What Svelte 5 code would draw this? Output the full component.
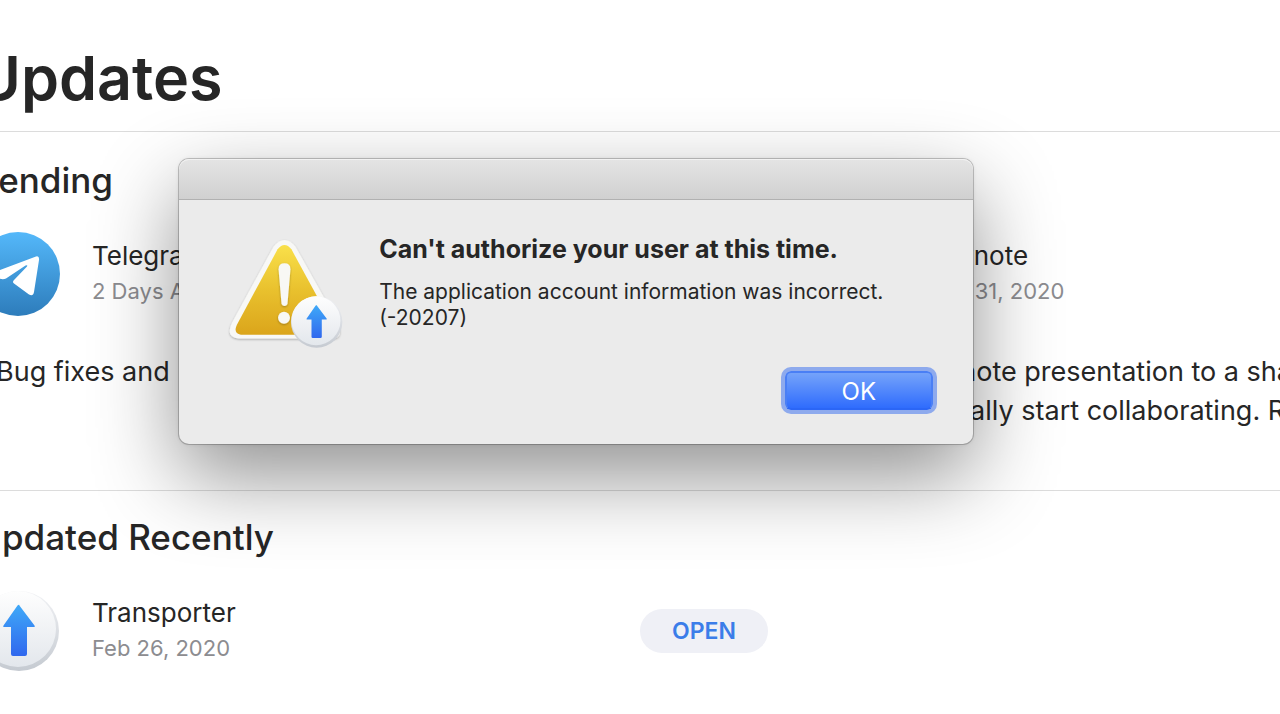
<script lang="ts">
  const pending = [
    { name: 'Telegram', date: '2 Days Ago', icon: 'telegram', notes: ['Bug fixes and'] },
    {
      name: 'Keynote',
      date: 'Mar 31, 2020',
      icon: '',
      notes: ['Move a Keynote presentation to a shared', 'to automatically start collaborating. Requires'],
    },
  ];

  const recent = [{ name: 'Transporter', date: 'Feb 26, 2020' }];
</script>

{#snippet transporter(id: string)}
  <svg class="icon" viewBox="0 0 84 84" aria-hidden="true">
    <defs>
      <linearGradient id="{id}-disc" x1="0" y1="0" x2="0" y2="1">
        <stop offset="0" stop-color="#fefefe" />
        <stop offset="1" stop-color="#e3e7ec" />
      </linearGradient>
      <linearGradient id="{id}-rim" x1="0" y1="0" x2="0" y2="1">
        <stop offset="0" stop-color="#f1f2f5" />
        <stop offset="1" stop-color="#c5cad1" />
      </linearGradient>
      <linearGradient id="{id}-arrow" x1="0" y1="0" x2="0" y2="1">
        <stop offset="0" stop-color="#3fa9f8" />
        <stop offset="1" stop-color="#3068ee" />
      </linearGradient>
    </defs>
    <circle cx="43" cy="42" r="40" fill="url(#{id}-rim)" />
    <circle cx="42" cy="40" r="38" fill="url(#{id}-disc)" />
    <path
      d="M43 16 L58.500 36.500 Q59.500 38 58 38 H51 V65 Q51 67 49 67 H37 Q35 67 35 65 V38 H28 Q26.500 38 27.500 36.500 L41.500 16.500 Q43 15 44 16.500 Z"
      fill="url(#{id}-arrow)"
    />
  </svg>
{/snippet}

<div class="store">
  <main>
    <header>
      <h1>Updates</h1>
    </header>

    <section class="pending">
      <h2>Pending</h2>
      <div class="columns">
        {#each pending as app}
          <article>
            <div class="app">
              {#if app.icon === 'telegram'}
                <svg class="icon" viewBox="0 0 84 84" aria-hidden="true">
                  <defs>
                    <linearGradient id="sky" x1="0" y1="0" x2="0" y2="1">
                      <stop offset="0" stop-color="#54b8fa" />
                      <stop offset="1" stop-color="#2d7cbb" />
                    </linearGradient>
                  </defs>
                  <circle cx="42" cy="42" r="42" fill="url(#sky)" />
                  <path
                    d="M16 41 L60 24.500 Q63.500 23.500 63 28 L58 60 Q57 65 53 62.500 L38 51.500 Q36 50 38 48 L51 34.500 Q52 32.500 49.500 33.500 L30 46.500 Q27 48 23 46.500 L16 44 Q13 42.500 16 41 Z"
                    fill="#fff"
                  />
                </svg>
              {:else}
                <div class="icon"></div>
              {/if}
              <div class="info">
                <h3>{app.name}</h3>
                <time>{app.date}</time>
              </div>
            </div>
            <p class="notes">
              {#each app.notes as line}
                <span>{line}</span>
              {/each}
            </p>
          </article>
        {/each}
      </div>
    </section>

    <section class="recent">
      <h2>Updated Recently</h2>
      <div class="columns">
        {#each recent as app}
          <article>
            <div class="app">
              {@render transporter('app')}
              <div class="info">
                <h3>{app.name}</h3>
                <time>{app.date}</time>
              </div>
              <button class="open" type="button">OPEN</button>
            </div>
          </article>
        {/each}
      </div>
    </section>
  </main>

  <div class="dialog" role="alertdialog" aria-labelledby="alert-title" aria-describedby="alert-text">
    <div class="titlebar"></div>
    <div class="body">
      <div class="alert-icon">
        <svg viewBox="0 0 120 112" aria-hidden="true">
          <defs>
            <linearGradient id="gold" x1="0" y1="0" x2="0" y2="1">
              <stop offset="0" stop-color="#f9e04a" />
              <stop offset="0.500" stop-color="#e9c12e" />
              <stop offset="1" stop-color="#dba51b" />
            </linearGradient>
            <filter id="soft" x="-10%" y="-10%" width="120%" height="125%">
              <feDropShadow dx="0" dy="1" stdDeviation="1" flood-opacity="0.300" />
            </filter>
          </defs>
          <path
            d="M48 9 Q59 -4 70 9 L112 84 Q120 102 106 102 H13 Q-1 101 6 86 Z"
            fill="#f8f8f6"
            filter="url(#soft)"
          />
          <path
            d="M52 12 Q59 3 66 12 L108 89 Q112 98 103 98 H15 Q7 97 11 88 Z"
            fill="url(#gold)"
          />
          <g fill="#f8f8f4" filter="url(#soft)">
            <path d="M53 32 Q53 26 59 26 Q65 26 65 32 L62 67 Q61 69 59 69 Q57 69 56 67 Z" />
            <circle cx="58.500" cy="81" r="6" />
          </g>
        </svg>
        <div class="badge">{@render transporter('badge')}</div>
      </div>
      <div class="message">
        <h2 id="alert-title">Can't authorize your user at this time.</h2>
        <p id="alert-text">The application account information was incorrect.<br />(-20207)</p>
        <button class="ok" type="button">OK</button>
      </div>
    </div>
  </div>
</div>

<style>
  :global(body) {
    margin: 0;
    background: #fff;
  }

  .store {
    position: relative;
    min-height: 100vh;
    overflow: hidden;
    color: #262626;
    font-family: Inter, 'Liberation Sans', sans-serif;
  }

  h1, h2, h3, p {
    margin: 0;
  }

  button {
    font-family: inherit;
  }

  main {
    margin-left: -24px;
  }

  header {
    padding: 40px 0 15px;
    border-bottom: 1px solid #dcdcdc;
  }

  h1 {
    font-size: 61px;
    line-height: 76px;
    font-weight: 600;
  }

  section {
    padding-top: 26px;
  }

  section h2 {
    margin-bottom: 30px;
    font-size: 35px;
    line-height: 44px;
    font-weight: 500;
  }

  .pending {
    padding-bottom: 60px;
    border-bottom: 1px solid #dcdcdc;
  }

  .recent {
    padding-top: 24px;
  }

  .columns {
    display: grid;
    grid-template-columns: 1fr 1fr;
    gap: 44px;
    /* the second column runs past the right edge of the window */
    margin-right: -324px;
  }

  .app {
    display: flex;
    align-items: center;
    gap: 32px;
  }

  .icon {
    display: block;
    flex: none;
    width: 84px;
    height: 84px;
  }

  .info {
    flex: 1;
    padding-bottom: 2px;
  }

  h3 {
    font-size: 26px;
    line-height: 36px;
    font-weight: 400;
  }

  time {
    display: block;
    color: #8c8c90;
    font-size: 22px;
    line-height: 34px;
  }

  .notes {
    margin-top: 36px;
    min-height: 78px;
    font-size: 27px;
    line-height: 39px;
    white-space: nowrap;
  }

  .notes span {
    display: block;
  }

  article:first-child .notes {
    padding-left: 20px;
  }

  .open {
    padding: 0 32px;
    border: 0;
    border-radius: 22px;
    background: #eff0f6;
    color: #3b7de9;
    font-size: 23px;
    line-height: 44px;
    font-weight: 600;
  }

  .dialog {
    position: absolute;
    top: 159px;
    left: 14%;
    width: 62%;
    border-radius: 10px;
    background: #ebebeb;
    box-shadow:
      0 0 0 1px rgba(0, 0, 0, 0.2),
      0 0 4px rgba(0, 0, 0, 0.1),
      0 32px 84px rgba(0, 0, 0, 0.44);
  }

  .titlebar {
    height: 40px;
    border-bottom: 1px solid #b1b1b1;
    border-radius: 10px 10px 0 0;
    background: linear-gradient(#e4e4e4, #d0d0d0);
    box-shadow: inset 0 1px #f2f2f2;
  }

  .body {
    display: flex;
    gap: 34px;
    padding: 32px 40px 34px 47px;
  }

  .alert-icon {
    position: relative;
    flex: none;
    width: 119px;
    height: 112px;
    margin-top: 5px;
  }

  .alert-icon > svg {
    display: block;
    width: 119px;
    height: 112px;
  }

  .badge {
    position: absolute;
    right: 2px;
    bottom: 0;
  }

  .badge .icon,
  .badge :global(.icon) {
    width: 54px;
    height: 54px;
  }

  .message {
    flex: 1;
    display: flex;
    flex-direction: column;
  }

  .message h2 {
    font-size: 25px;
    line-height: 34px;
    font-weight: 700;
  }

  .message p {
    margin: 13px 0 40px;
    font-size: 21px;
    line-height: 26px;
  }

  .ok {
    align-self: flex-end;
    width: 148px;
    height: 39px;
    padding: 2px 0 0;
    border: 2px solid #4a7ff5;
    border-bottom-color: #2b66f6;
    border-radius: 6px;
    background: linear-gradient(#75a3fa, #2f6cfd);
    box-shadow: 0 0 0 4px #8eaaed;
    color: #fff;
    font-size: 24px;
    line-height: 32px;
  }
</style>
